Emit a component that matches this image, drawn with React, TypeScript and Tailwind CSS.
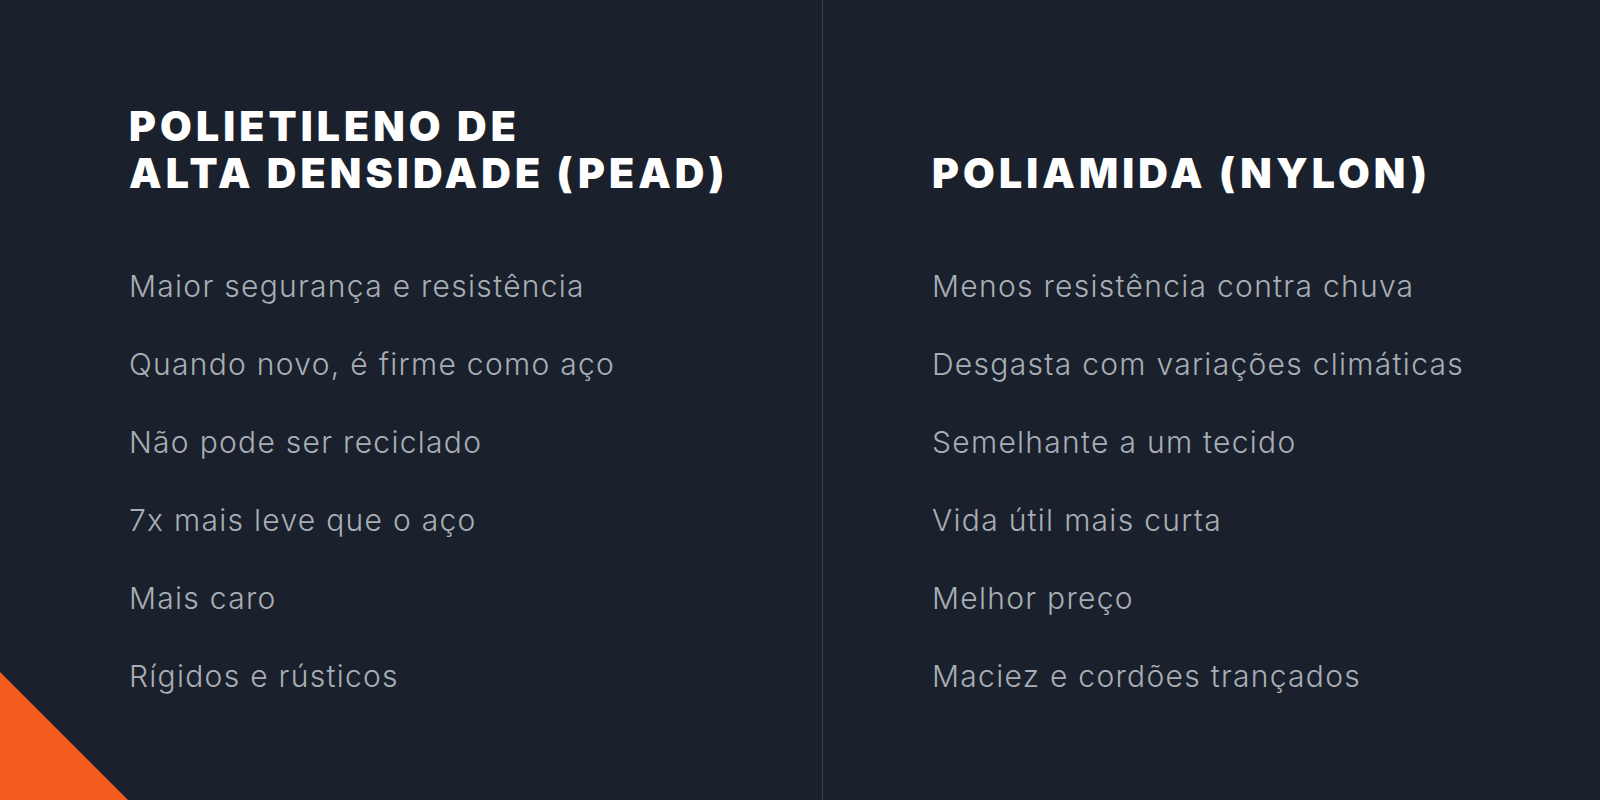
const pead = [
  'Maior segurança e resistência',
  'Quando novo, é firme como aço',
  'Não pode ser reciclado',
  '7x mais leve que o aço',
  'Mais caro',
  'Rígidos e rústicos',
];

const nylon = [
  'Menos resistência contra chuva',
  'Desgasta com variações climáticas',
  'Semelhante a um tecido',
  'Vida útil mais curta',
  'Melhor preço',
  'Maciez e cordões trançados',
];

function Column({ title, items }: { title: React.ReactNode; items: string[] }) {
  return (
    <div className="pt-[103px]">
      <h2 className="h-[94px] flex items-end font-['Inter',sans-serif] font-black text-[41px] leading-[47px] tracking-[0.1em] text-white uppercase">
        <span>{title}</span>
      </h2>
      <ul className="mt-[50px] font-['Inter',sans-serif] font-light text-[30px] leading-[78px] tracking-[0.043em] text-[#a9aeb5]">
        {items.map(item => (
          <li key={item}>{item}</li>
        ))}
      </ul>
    </div>
  );
}

export default function App() {
  return (
    <div className="relative flex h-[800px] w-[1600px] overflow-hidden bg-[#1a212c]">
      <section className="w-[823px] shrink-0 border-r border-[#3a4350] pl-[129px]">
        <Column
          title={
            <>
              Polietileno de
              <br />
              Alta densidade (PEAD)
            </>
          }
          items={pead}
        />
      </section>
      <section className="flex-1 pl-[109px]">
        <Column title="Poliamida (Nylon)" items={nylon} />
      </section>

      {/* corner accent */}
      <svg className="absolute bottom-0 left-0" width="128" height="128" viewBox="0 0 128 128">
        <polygon points="0,0 0,128 128,128" fill="#f45d1f" />
      </svg>
    </div>
  );
}
